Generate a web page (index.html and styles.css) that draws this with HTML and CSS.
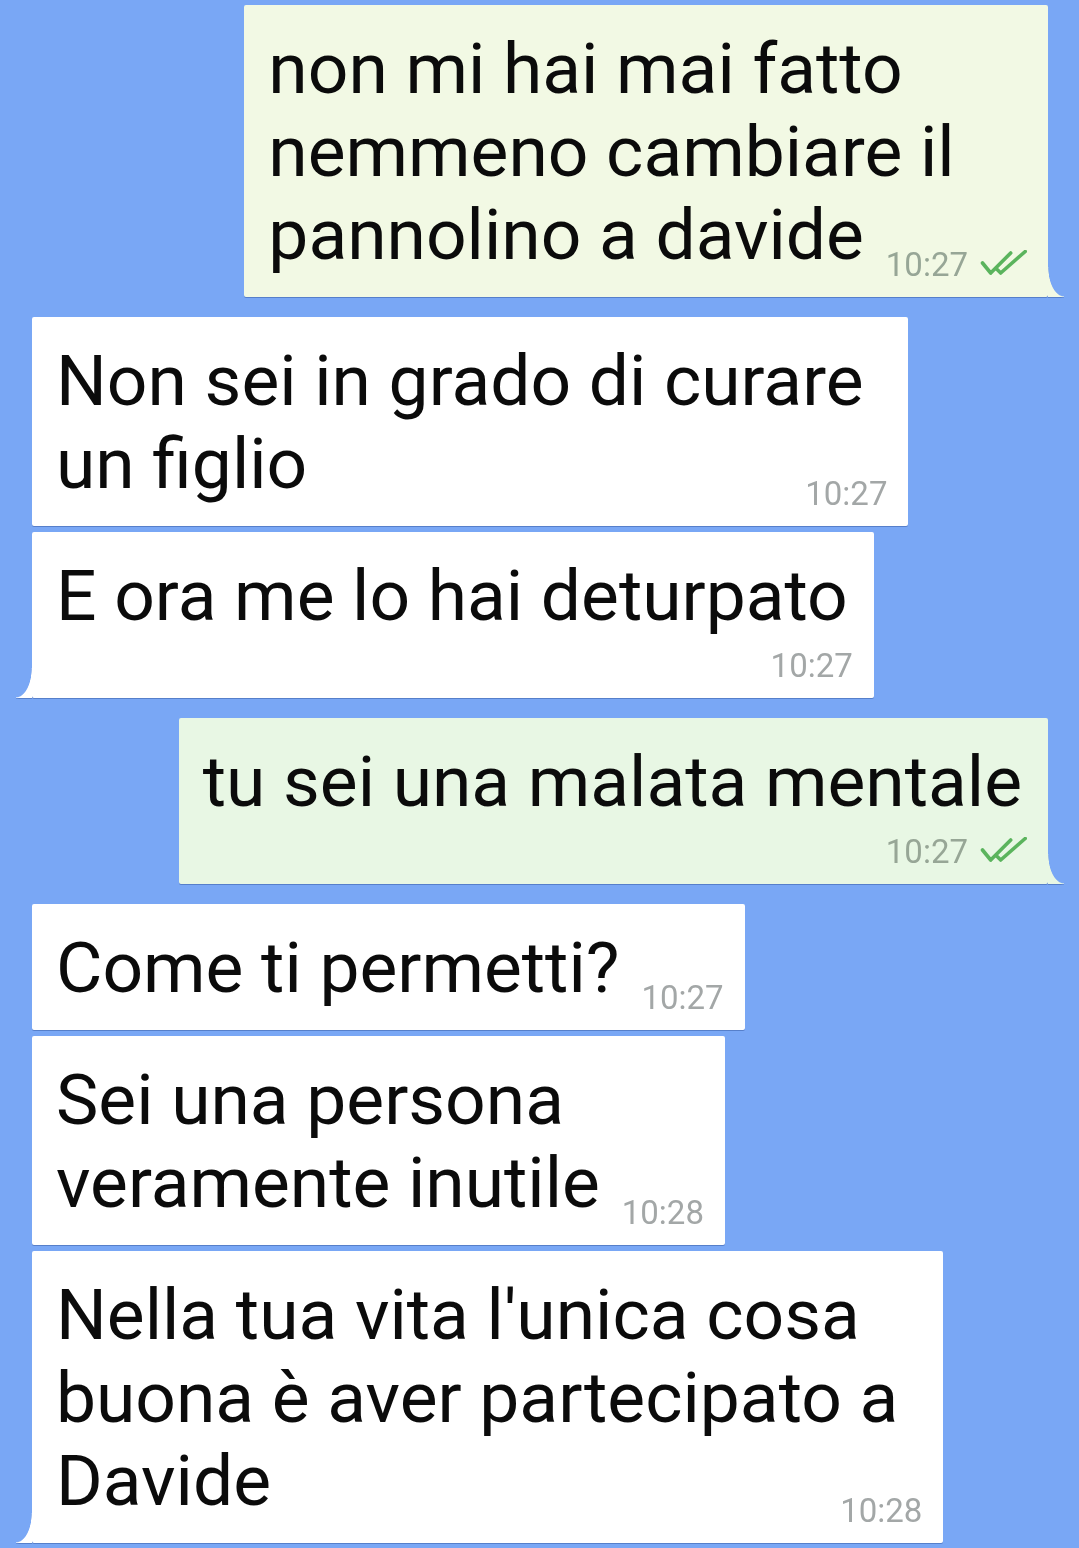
FILE: index.html
```html
<!DOCTYPE html>
<html lang="it">
<head>
<meta charset="utf-8">
<title>Chat</title>
<link rel="stylesheet" href="styles.css">
</head>
<body>
<main class="chat">
  <div class="bubble out out-a tail">
    <div class="line">non mi hai mai fatto</div>
    <div class="line">nemmeno cambiare il</div>
    <div class="line last">
      <span>pannolino a davide</span>
      <span class="meta">10:27<svg class="ticks" viewBox="0 0 47 25" width="47" height="25"><path d="M2.5 13 L10.7 23 L30.7 3 M15.7 18 L20.7 23 L45.2 1.5"/></svg></span>
    </div>
  </div>

  <div class="bubble in wide group">
    <div class="line">Non sei in grado di curare</div>
    <div class="line last">
      <span>un figlio</span>
      <span class="meta">10:27</span>
    </div>
  </div>

  <div class="bubble in tail cont">
    <div class="line">E ora me lo hai deturpato</div>
    <div class="meta-row"><span class="meta">10:27</span></div>
  </div>

  <div class="bubble out out-b tail group">
    <div class="line">tu sei una malata mentale</div>
    <div class="meta-row"><span class="meta">10:27<svg class="ticks" viewBox="0 0 47 25" width="47" height="25"><path d="M2.5 13 L10.7 23 L30.7 3 M15.7 18 L20.7 23 L45.2 1.5"/></svg></span></div>
  </div>

  <div class="bubble in group">
    <div class="line last">
      <span>Come ti permetti?</span>
      <span class="meta">10:27</span>
    </div>
  </div>

  <div class="bubble in cont">
    <div class="line">Sei una persona</div>
    <div class="line last">
      <span>veramente inutile</span>
      <span class="meta">10:28</span>
    </div>
  </div>

  <div class="bubble in wide tail cont">
    <div class="line">Nella tua vita l'unica cosa</div>
    <div class="line">buona è aver partecipato a</div>
    <div class="line last">
      <span>Davide</span>
      <span class="meta">10:28</span>
    </div>
  </div>
</main>
</body>
</html>
```

FILE: styles.css
```css
html, body {
  margin: 0;
  padding: 0;
}

body {
  background: #79a7f5;
  font-family: Roboto, "Noto Sans", "Liberation Sans", sans-serif;
  color: #0b0b0b;
  width: 1079px;
  height: 1548px;
  overflow: hidden;
}

.chat {
  display: flex;
  flex-direction: column;
  align-items: flex-start;
  padding: 5px 31px 0 32px;
}

.bubble {
  --bg: #ffffff;
  position: relative;
  background: var(--bg);
  border-radius: 2px;
  padding: 22px 21px 21px 24px;
  font-size: 71.3px;
  line-height: 83px;
  filter: drop-shadow(0 1.5px 0 rgba(45, 80, 150, 0.45));
}

.bubble.group {
  margin-top: 20px;
}

.bubble.cont {
  margin-top: 6px;
}

.bubble.out {
  align-self: flex-end;
}

.bubble.out-a {
  --bg: #f2f9e4;
}

.bubble.out-b {
  --bg: #e8f7e4;
}

.line {
  white-space: nowrap;
  padding-right: 5px;
}

.bubble.wide .line {
  padding-right: 24px;
}

.bubble .line.last {
  display: flex;
  align-items: flex-end;
  gap: 22px;
  padding-right: 0;
}

.line.last .meta {
  margin-left: auto;
}

.meta-row {
  display: flex;
  justify-content: flex-end;
  margin-top: 18px;
}

.meta {
  display: block;
  font-size: 33px;
  line-height: 22px;
  white-space: nowrap;
  color: #a3a7a7;
}

.out .meta {
  color: #97a696;
}

.ticks {
  margin-left: 12px;
  margin-top: -4px;
  vertical-align: 1px;
  fill: none;
  stroke: #5bb45d;
  stroke-width: 3.6;
  stroke-linecap: round;
  stroke-linejoin: round;
}

.bubble.tail::after {
  content: "";
  position: absolute;
  bottom: 0;
  width: 16px;
  height: 30px;
}

.bubble.in.tail::after {
  left: -16px;
  background: radial-gradient(ellipse 16px 30px at 0 0, transparent 96%, var(--bg) 100%);
}

.bubble.out.tail::after {
  right: -16px;
  background: radial-gradient(ellipse 16px 30px at 100% 0, transparent 96%, var(--bg) 100%);
}
```
